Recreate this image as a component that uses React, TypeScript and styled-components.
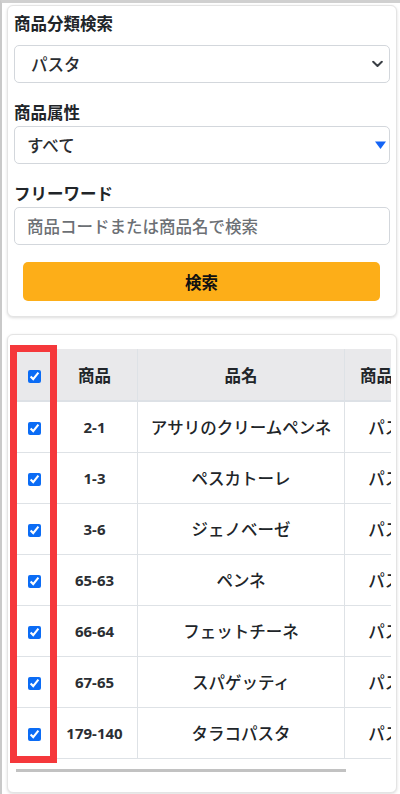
import React from "react";
import styled, { createGlobalStyle } from "styled-components";

const GlobalStyle = createGlobalStyle`
  html, body {
    margin: 0;
    padding: 0;
    background: #ffffff;
  }
  body {
    font-family: "Noto Sans", "Noto Sans CJK JP", sans-serif;
    color: #212529;
  }
  * { box-sizing: border-box; }
`;

const Page = styled.div`
  min-height: 794px;
  border-left: 2px solid #c9c9c9;
  border-top: 3px solid #d0d0d0;
  padding: 2px 3px 0 5px;
`;

const Card = styled.section<{ $pad: string; $mt?: number }>`
  background: #fff;
  border: 1px solid #e4e4e4;
  border-radius: 6px;
  box-shadow: 0 1px 3px rgba(0, 0, 0, 0.14);
  padding: ${(p) => p.$pad};
  margin-top: ${(p) => p.$mt ?? 0}px;
`;

const Label = styled.label<{ $mt: number; $mb: number }>`
  display: block;
  font-size: 16.5px;
  font-weight: 700;
  line-height: 24px;
  margin-top: ${(p) => p.$mt}px;
  margin-bottom: ${(p) => p.$mb}px;
  color: #212529;
`;

const SelectWrap = styled.div`
  position: relative;
`;

const Select = styled.select<{ $pl: number }>`
  appearance: none;
  -webkit-appearance: none;
  display: block;
  width: 100%;
  height: 38px;
  border: 1px solid #d3d7dc;
  border-radius: 5px;
  background: #fff;
  padding: 0 34px 0 ${(p) => p.$pl}px;
  font-family: inherit;
  font-size: 16.5px;
  font-weight: 500;
  color: #2a2d31;
  outline: none;
`;

const IconSlot = styled.span<{ $right: number }>`
  position: absolute;
  top: 50%;
  right: ${(p) => p.$right}px;
  transform: translateY(-50%);
  display: flex;
  pointer-events: none;
`;

const TextInput = styled.input`
  display: block;
  width: 100%;
  height: 38px;
  border: 1px solid #d3d7dc;
  border-radius: 5px;
  padding: 0 12px;
  font-family: inherit;
  font-size: 16.5px;
  font-weight: 500;
  color: #212529;
  outline: none;
  &::placeholder {
    color: #6c7075;
  }
`;

const SearchButton = styled.button`
  display: block;
  width: calc(100% - 19px);
  margin: 17px 10px 0 9px;
  height: 39px;
  border: none;
  border-radius: 5px;
  background: #fdae18;
  font-family: inherit;
  font-size: 16.5px;
  font-weight: 700;
  color: #111;
`;

const TableArea = styled.div`
  position: relative;
`;

const ScrollWrap = styled.div`
  overflow: hidden;
  width: 100%;
`;

const Table = styled.table`
  border-collapse: collapse;
  width: 425px;
  table-layout: fixed;
`;

const HeadCell = styled.th<{ $w: number }>`
  width: ${(p) => p.$w}px;
  height: 52px;
  background: #e9e9eb;
  border: 1px solid #dee2e6;
  border-top: none;
  border-bottom: 2px solid #dde1e6;
  font-size: 16.5px;
  font-weight: 700;
  text-align: center;
  vertical-align: middle;
  padding: 0;
  white-space: nowrap;
  color: #212529;
`;

const Cell = styled.td<{ $code?: boolean }>`
  height: 51px;
  border: 1px solid #dee2e6;
  text-align: center;
  vertical-align: middle;
  padding: 0;
  white-space: nowrap;
  font-size: ${(p) => (p.$code ? "15px" : "16.5px")};
  font-weight: ${(p) => (p.$code ? 700 : 500)};
  color: ${(p) => (p.$code ? "#2b2e33" : "#212529")};
`;

const Check = styled.input`
  width: 13px;
  height: 13px;
  margin: 0;
  accent-color: #0b6cf5;
  vertical-align: middle;
`;

const Highlight = styled.div`
  position: absolute;
  left: -6px;
  top: -4px;
  width: 47px;
  height: 418px;
  border: 7px solid #f5383b;
  pointer-events: none;
`;

const ScrollTrack = styled.div`
  margin-top: 10px;
  height: 3px;
  width: 100%;
`;

const ScrollThumb = styled.div`
  height: 100%;
  background: #c2c2c2;
`;

const rows = [
  { code: "2-1", name: "アサリのクリームペンネ", cat: "パスタ" },
  { code: "1-3", name: "ペスカトーレ", cat: "パスタ" },
  { code: "3-6", name: "ジェノベーゼ", cat: "パスタ" },
  { code: "65-63", name: "ペンネ", cat: "パスタ" },
  { code: "66-64", name: "フェットチーネ", cat: "パスタ" },
  { code: "67-65", name: "スパゲッティ", cat: "パスタ" },
  { code: "179-140", name: "タラコパスタ", cat: "パスタ" },
];

const Chevron = () => (
  <svg width="11" height="7" viewBox="0 0 11 7">
    <polyline
      points="1.2,1.2 5.5,5.5 9.8,1.2"
      fill="none"
      stroke="#3a3f45"
      strokeWidth="2"
      strokeLinecap="round"
      strokeLinejoin="round"
    />
  </svg>
);

const BlueTriangle = () => (
  <svg width="11" height="8" viewBox="0 0 11 8">
    <polygon points="0,0.5 11,0.5 5.5,8" fill="#1464f5" />
  </svg>
);

export default function App() {
  return (
    <>
      <GlobalStyle />
      <Page>
        <Card $pad="6px 6px 15px 6px">
          <Label $mt={0} $mb={9}>商品分類検索</Label>
          <SelectWrap>
            <Select $pl={16} defaultValue="pasta">
              <option value="pasta">パスタ</option>
            </Select>
            <IconSlot $right={7}>
              <Chevron />
            </IconSlot>
          </SelectWrap>

          <Label $mt={18} $mb={1}>商品属性</Label>
          <SelectWrap>
            <Select $pl={12} defaultValue="all">
              <option value="all">すべて</option>
            </Select>
            <IconSlot $right={4}>
              <BlueTriangle />
            </IconSlot>
          </SelectWrap>

          <Label $mt={18} $mb={1}>フリーワード</Label>
          <TextInput placeholder="商品コードまたは商品名で検索" />

          <SearchButton type="button">検索</SearchButton>
        </Card>

        <Card $pad="14px 5px 20px 8px" $mt={17}>
          <TableArea>
            <ScrollWrap>
              <Table>
                <thead>
                  <tr>
                    <HeadCell $w={35}>
                      <Check type="checkbox" defaultChecked />
                    </HeadCell>
                    <HeadCell $w={86}>商品</HeadCell>
                    <HeadCell $w={207}>品名</HeadCell>
                    <HeadCell $w={97}>商品分類</HeadCell>
                  </tr>
                </thead>
                <tbody>
                  {rows.map((r) => (
                    <tr key={r.code}>
                      <Cell>
                        <Check type="checkbox" defaultChecked />
                      </Cell>
                      <Cell $code>{r.code}</Cell>
                      <Cell>{r.name}</Cell>
                      <Cell>{r.cat}</Cell>
                    </tr>
                  ))}
                </tbody>
              </Table>
            </ScrollWrap>
            <Highlight />
            <ScrollTrack>
              <ScrollThumb style={{ width: `${(329 / 374) * 100}%` }} />
            </ScrollTrack>
          </TableArea>
        </Card>
      </Page>
    </>
  );
}
